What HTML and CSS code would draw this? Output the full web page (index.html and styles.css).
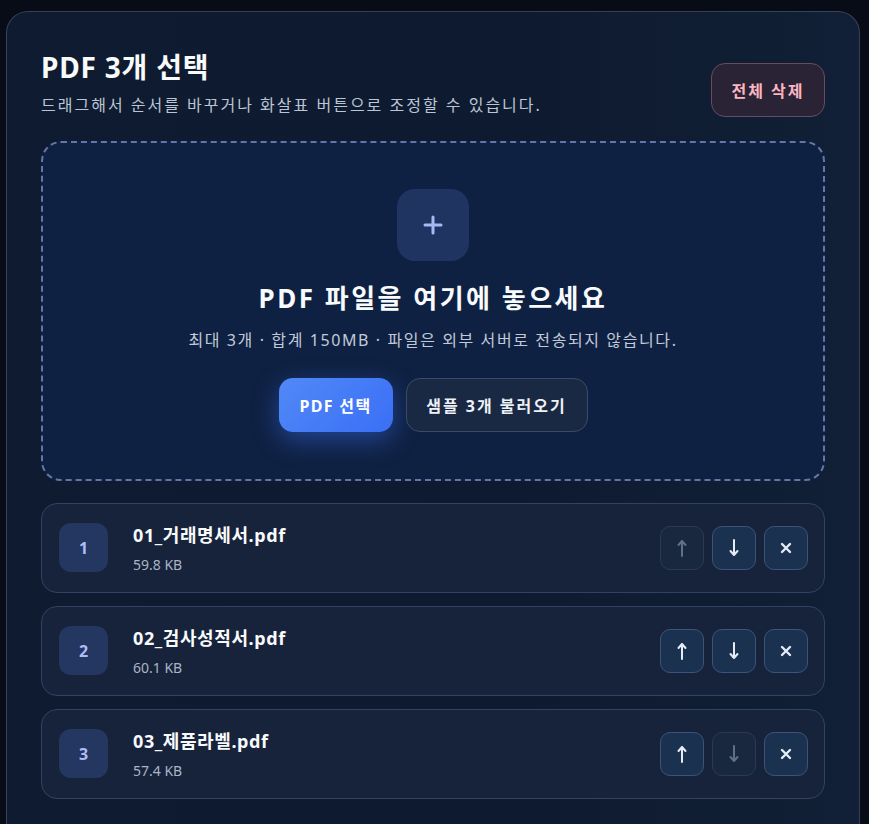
FILE: index.html
```html
<!DOCTYPE html>
<html lang="ko">
<head>
<meta charset="utf-8">
<title>PDF 선택</title>
<link rel="stylesheet" href="styles.css">
</head>
<body>
<main class="card">
  <header class="head">
    <div class="head-text">
      <h1 class="title">PDF 3개 선택</h1>
      <p class="subtitle">드래그해서 순서를 바꾸거나 화살표 버튼으로 조정할 수 있습니다.</p>
    </div>
    <button class="btn-danger">전체 삭제</button>
  </header>

  <section class="drop">
    <div class="plus-box">
      <svg width="22" height="22" viewBox="0 0 22 22"><path d="M11 3v16M3 11h16" stroke="#a9b8f5" stroke-width="3" stroke-linecap="round"/></svg>
    </div>
    <h2 class="drop-title">PDF 파일을 여기에 놓으세요</h2>
    <p class="drop-sub">최대 3개 · 합계 150MB · 파일은 외부 서버로 전송되지 않습니다.</p>
    <div class="drop-actions">
      <button class="btn-primary">PDF 선택</button>
      <button class="btn-ghost">샘플 3개 불러오기</button>
    </div>
  </section>

  <ul class="files">
    <li class="file">
      <div class="num">1</div>
      <div class="info">
        <div class="name">01_거래명세서.pdf</div>
        <div class="size">59.8 KB</div>
      </div>
      <div class="acts">
        <button class="act off"><svg width="16" height="20" viewBox="0 0 16 20"><path d="M8 18V3M4.5 7L8 3l3.5 4" fill="none" stroke="currentColor" stroke-width="2" stroke-linecap="round" stroke-linejoin="round"/></svg></button>
        <button class="act"><svg width="16" height="20" viewBox="0 0 16 20"><path d="M8 2v15M4.5 13L8 17l3.5-4" fill="none" stroke="currentColor" stroke-width="2" stroke-linecap="round" stroke-linejoin="round"/></svg></button>
        <button class="act"><svg width="14" height="14" viewBox="0 0 14 14"><path d="M3 3l8 8M11 3l-8 8" fill="none" stroke="currentColor" stroke-width="2.4" stroke-linecap="round"/></svg></button>
      </div>
    </li>
    <li class="file">
      <div class="num">2</div>
      <div class="info">
        <div class="name">02_검사성적서.pdf</div>
        <div class="size">60.1 KB</div>
      </div>
      <div class="acts">
        <button class="act"><svg width="16" height="20" viewBox="0 0 16 20"><path d="M8 18V3M4.5 7L8 3l3.5 4" fill="none" stroke="currentColor" stroke-width="2" stroke-linecap="round" stroke-linejoin="round"/></svg></button>
        <button class="act"><svg width="16" height="20" viewBox="0 0 16 20"><path d="M8 2v15M4.5 13L8 17l3.5-4" fill="none" stroke="currentColor" stroke-width="2" stroke-linecap="round" stroke-linejoin="round"/></svg></button>
        <button class="act"><svg width="14" height="14" viewBox="0 0 14 14"><path d="M3 3l8 8M11 3l-8 8" fill="none" stroke="currentColor" stroke-width="2.4" stroke-linecap="round"/></svg></button>
      </div>
    </li>
    <li class="file">
      <div class="num">3</div>
      <div class="info">
        <div class="name">03_제품라벨.pdf</div>
        <div class="size">57.4 KB</div>
      </div>
      <div class="acts">
        <button class="act"><svg width="16" height="20" viewBox="0 0 16 20"><path d="M8 18V3M4.5 7L8 3l3.5 4" fill="none" stroke="currentColor" stroke-width="2" stroke-linecap="round" stroke-linejoin="round"/></svg></button>
        <button class="act off"><svg width="16" height="20" viewBox="0 0 16 20"><path d="M8 2v15M4.5 13L8 17l3.5-4" fill="none" stroke="currentColor" stroke-width="2" stroke-linecap="round" stroke-linejoin="round"/></svg></button>
        <button class="act"><svg width="14" height="14" viewBox="0 0 14 14"><path d="M3 3l8 8M11 3l-8 8" fill="none" stroke="currentColor" stroke-width="2.4" stroke-linecap="round"/></svg></button>
      </div>
    </li>
  </ul>
</main>
</body>
</html>
```

FILE: styles.css
```css
* { box-sizing: border-box; }
html, body { margin: 0; height: 100%; }
body {
  background: #070c16;
  font-family: "Noto Sans", "Noto Sans CJK KR", sans-serif;
  color: #f1f5f9;
  overflow: hidden;
}
.card {
  margin: 11px 9px 0 6px;
  min-height: 900px;
  padding: 37px 34px 40px 34px;
  border: 1px solid rgba(148, 163, 184, 0.28);
  border-radius: 22px;
  background: linear-gradient(90deg, #0f1b30 0%, #0e1a2f 60%, #112036 100%);
}
.head {
  display: flex;
  justify-content: space-between;
  align-items: flex-end;
  margin-bottom: 25px;
}
.title {
  margin: 0;
  font-size: 28px;
  line-height: 36px;
  font-weight: 700;
  letter-spacing: 0.8px;
  color: #f8fafc;
}
.subtitle {
  margin: 9px 0 0;
  font-size: 16px;
  line-height: 22px;
  letter-spacing: 2px;
  color: #bcc5d4;
}
.btn-danger {
  width: 114px;
  height: 54px;
  margin-bottom: -1px;
  border-radius: 14px;
  border: 1px solid #6a4a5f;
  background: #2a2336;
  color: #fbb6c1;
  font-family: inherit;
  font-size: 16px;
  font-weight: 700;
  letter-spacing: 2px;
}
.drop {
  display: flex;
  flex-direction: column;
  align-items: center;
  padding: 46px 20px 47px;
  border: 2px dashed #6576a6;
  border-radius: 20px;
  background: #0f2142;
}
.plus-box {
  width: 72px;
  height: 72px;
  border-radius: 18px;
  background: #203462;
  display: flex;
  align-items: center;
  justify-content: center;
}
.drop-title {
  margin: 21px 0 0;
  font-size: 26px;
  line-height: 32px;
  font-weight: 700;
  letter-spacing: 2.5px;
  color: #f8fafc;
}
.drop-sub {
  margin: 15px 0 0;
  font-size: 16px;
  line-height: 22px;
  letter-spacing: 1.6px;
  color: #c2cad8;
}
.drop-actions {
  display: flex;
  gap: 13px;
  margin-top: 27px;
}
.btn-primary, .btn-ghost {
  height: 54px;
  border-radius: 14px;
  font-family: inherit;
  font-size: 16px;
  font-weight: 700;
  color: #ffffff;
}
.btn-primary {
  width: 114px;
  border: none;
  letter-spacing: 1.3px;
  background: linear-gradient(135deg, #5189f7 0%, #3a6ff6 100%);
  box-shadow: 0 8px 26px rgba(59, 111, 246, 0.45);
}
.btn-ghost {
  width: 182px;
  border: 1px solid #3a4a68;
  background: #1a2943;
  color: #eef2f7;
  letter-spacing: 2px;
}
.files {
  list-style: none;
  margin: 22px 0 0;
  padding: 0;
  display: flex;
  flex-direction: column;
  gap: 13px;
}
.file {
  display: flex;
  align-items: center;
  padding: 17px 16px 18px 17px;
  border: 1px solid #334260;
  border-radius: 16px;
  background: #17233a;
}
.num {
  width: 49px;
  height: 49px;
  border-radius: 12px;
  background: #243760;
  color: #aebcf6;
  font-size: 16px;
  font-weight: 700;
  display: flex;
  align-items: center;
  justify-content: center;
}
.info {
  flex: 1;
  margin-left: 25px;
  padding-top: 2px;
}
.name {
  font-size: 18px;
  line-height: 24px;
  font-weight: 700;
  letter-spacing: 0.6px;
  color: #f8fafc;
}
.size {
  margin-top: 9px;
  font-size: 14px;
  line-height: 18px;
  color: #aab4c5;
}
.acts {
  display: flex;
  gap: 8px;
}
.act {
  width: 44px;
  height: 44px;
  padding: 0;
  border-radius: 10px;
  border: 1px solid #3b5477;
  background: #1b3150;
  color: #e6ecf5;
  display: flex;
  align-items: center;
  justify-content: center;
}
.act.off {
  border-color: #2a3a55;
  background: #19283f;
  color: #5f7089;
}
```
